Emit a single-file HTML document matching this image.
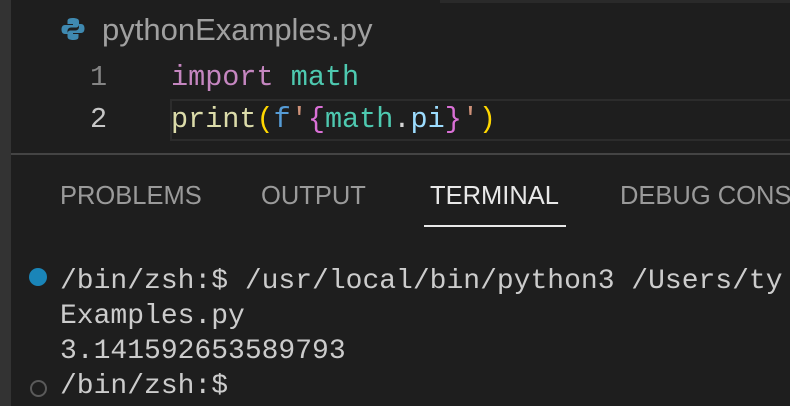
<!DOCTYPE html>
<html><head><style>
body{margin:0;width:790px;height:406px;background:#1e1e1e;position:relative;overflow:hidden;font-family:"Liberation Sans",sans-serif}
.wrap{position:absolute;left:0;top:0;width:790px;height:406px;overflow:hidden}
.strip{position:absolute;left:0;top:0;width:11px;height:406px;background:#333}
.topbar{position:absolute;left:440px;top:0;width:350px;height:3px;background:#2a2a2a}
.t{position:absolute;white-space:pre}
.mono{font-family:"Liberation Mono",monospace;font-size:28.5px}
.ln{position:absolute;left:11px;top:153px;width:779px;height:2px;background:#444}
.cur{position:absolute;left:170px;top:99px;width:620px;height:42px;border:2px solid #2c2c2c;border-right:none;box-sizing:border-box}
.tab{position:absolute;top:182px;font-size:25.5px;color:#9a9a9a;white-space:nowrap}
</style></head><body><div class="wrap">
<div class="strip"></div><div class="topbar"></div>
<svg style="position:absolute;left:60px;top:16px" width="26" height="26" viewBox="0 0 26 26"><path d="M12.5 2c-5 0-5 2-5 3.5V8h5.5v1H5C2.5 9 1.5 11 1.5 13.5S2.5 18 5 18h2.5v-3c0-2 1.5-3.5 3.5-3.5h5c1.7 0 3-1.3 3-3V5.5C19 3 17 2 12.5 2z" fill="#3f89b0"/><path d="M13.5 24c5 0 5-2 5-3.5V18H13v-1h8c2.5 0 3.5-2 3.5-4.5S23.5 8 21 8h-2v3c0 2-1.5 3.5-3.5 3.5h-5c-1.7 0-3 1.3-3 3v3c0 2.5 2 3.5 6 3.5z" fill="#3f89b0"/></svg>
<div class="t" style="left:102px;top:12px;font-size:31px;color:#a0a0a0">pythonExamples.py</div>
<div class="cur"></div>
<div class="t mono" style="left:90px;top:61px;color:#858585">1</div>
<div class="t mono" style="left:90px;top:103px;color:#c6c6c6">2</div>
<div class="t mono" style="left:171px;top:61px"><span style="color:#c586c0">import</span> <span style="color:#4ec9b0">math</span></div>
<div class="t mono" style="left:171px;top:103px"><span style="color:#dcdcaa">print</span><span style="color:#ffd700">(</span><span style="color:#569cd6">f</span><span style="color:#ce9178">'</span><span style="color:#da70d6">{</span><span style="color:#4ec9b0">math</span><span style="color:#d4d4d4">.</span><span style="color:#9cdcfe">pi</span><span style="color:#da70d6">}</span><span style="color:#ce9178">'</span><span style="color:#ffd700">)</span></div>
<div class="ln"></div>
<div class="tab" style="left:60px">PROBLEMS</div>
<div class="tab" style="left:261px">OUTPUT</div>
<div class="tab" style="left:430px;color:#e8e8e8">TERMINAL</div>
<div class="tab" style="left:620px">DEBUG CONS</div>
<div style="position:absolute;left:424px;top:225px;width:142px;height:2px;background:#e8e8e8"></div>
<div style="position:absolute;left:29px;top:268px;width:18px;height:18px;border-radius:50%;background:#1a85b8"></div>
<div style="position:absolute;left:30px;top:380px;width:13px;height:13px;border-radius:50%;border:2.5px solid #5a5a5a"></div>
<div class="t mono" style="left:60px;top:264px;color:#cccccc;font-size:28px;line-height:35px">/bin/zsh:$ /usr/local/bin/python3 /Users/ty
Examples.py
3.141592653589793
/bin/zsh:$</div>
</div></body></html>
